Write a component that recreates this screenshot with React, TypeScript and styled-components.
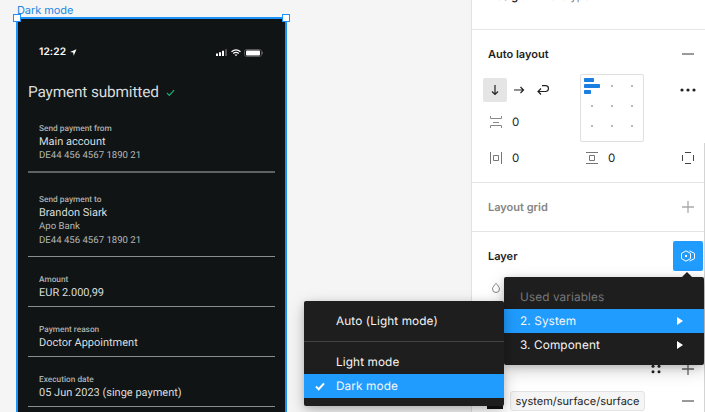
import React from 'react';
import styled, { createGlobalStyle } from 'styled-components';

const GlobalStyle = createGlobalStyle`
  * { box-sizing: border-box; }
  body { margin: 0; overflow: hidden; background: #f5f5f5; }
`;

const Editor = styled.div`
  position: relative;
  display: flex;
  width: 705px;
  height: 412px;
  overflow: hidden;
  background: #f5f5f5;
  color: #222;
  font: 12px/16px Inter, 'Liberation Sans', sans-serif;
  text-rendering: geometricPrecision;
`;

/* Canvas */
const Canvas = styled.div`
  flex: 0 0 471px;
  padding: 3px 0 0 16px;
`;

const FrameName = styled.div`
  height: 14px;
  padding-left: 1px;
  font-size: 11px;
  line-height: 14px;
  letter-spacing: -0.08px;
  color: #2187e0;
  white-space: nowrap;
`;

const Frame = styled.div`
  position: relative;
  width: 271px;
  height: 420px;
  padding: 0 10px;
  border: 2px solid #1b93f8;
  background: #101415;
  font-family: Roboto, sans-serif;
`;

const Handle = styled.i<{ $side: 'left' | 'right' }>`
  position: absolute;
  top: -5px;
  ${(p) => p.$side}: -5px;
  width: 8px;
  height: 8px;
  border: 1px solid #1b93f8;
  background: #fff;
`;

const StatusBar = styled.div`
  display: flex;
  align-items: center;
  height: 20px;
  margin: 23px 11px 0 11px;
  font: 600 10.2px/20px Inter, sans-serif;
  color: #fff;
`;

const Clock = styled.span`
  width: 30px;
  letter-spacing: 0.1px;
`;

const StatusIcons = styled.span`
  display: flex;
  align-items: center;
  gap: 3px;
  margin-left: auto;
  padding-top: 1px;
`;

const Heading = styled.h1`
  display: flex;
  align-items: center;
  gap: 7px;
  height: 24px;
  margin: 18px 0 0;
  font-size: 15.4px;
  font-weight: 400;
  letter-spacing: -0.16px;
  color: #d9dddc;
`;

const Fields = styled.div`
  display: flex;
  flex-direction: column;
  width: 247px;
  margin-top: 3px;
`;

const Field = styled.div<{ $height: number; $inset: number; $thick?: boolean }>`
  display: flex;
  flex-direction: column;
  height: ${(p) => p.$height}px;
  padding: ${(p) => p.$inset}px 0 0 11px;
  border-bottom: ${(p) => (p.$thick ? '2px solid #5f6263' : '1px solid #8b8d8e')};
`;

const Label = styled.span`
  height: 13px;
  font-size: 8.3px;
  font-weight: 500;
  line-height: 14px;
  color: #adb2b1;
`;

const Value = styled.span`
  height: 14px;
  font-size: 11px;
  line-height: 14px;
  color: #d9dddc;
`;

const Detail = styled.span`
  height: 14px;
  font-size: 9.6px;
  line-height: 14px;
  color: #b3b8b7;
`;

/* Inspector */
const Inspector = styled.aside`
  flex: 0 0 234px;
  height: 412px;
  overflow: hidden;
  border-left: 1px solid #e2e2e2;
  background: #fff;
`;

const Tabs = styled.nav`
  display: flex;
  gap: 14px;
  align-items: flex-start;
  height: 30px;
  padding-left: 16px;
  border-bottom: 1px solid #e5e5e5;
  font-size: 11px;
`;

const Tab = styled.span<{ $active?: boolean }>`
  margin-top: -12px;
  color: ${(p) => (p.$active ? '#1e1e1e' : '#808080')};
  font-weight: ${(p) => (p.$active ? 600 : 400)};
`;

const Section = styled.section<{ $height: number }>`
  height: ${(p) => p.$height}px;
  border-bottom: 1px solid #e5e5e5;
`;

const SectionHeader = styled.header<{ $muted?: boolean }>`
  display: flex;
  align-items: center;
  justify-content: space-between;
  height: 48px;
  padding: 0 11px 0 16px;
  font-size: 11px;
  font-weight: 600;
  color: ${(p) => (p.$muted ? '#858585' : '#1e1e1e')};
`;

const LayoutControls = styled.div`
  display: grid;
  grid-template-columns: 97px 64px 1fr;
  height: 64px;
  margin-top: -4px;
  padding-left: 11px;
`;

const FlowColumn = styled.div`
  display: flex;
  flex-direction: column;
  gap: 8px;
  padding-top: 4px;
`;

const Row = styled.div<{ $indent?: number }>`
  display: flex;
  height: 24px;
  padding-left: ${(p) => p.$indent ?? 0}px;
`;

const Cell = styled.span<{ $active?: boolean }>`
  display: grid;
  place-items: center;
  width: 24px;
  height: 24px;
  border-radius: 2px;
  background: ${(p) => (p.$active ? '#e5e5e5' : 'transparent')};
`;

const Amount = styled.span`
  padding-left: 4px;
  font-size: 11.5px;
  line-height: 24px;
`;

const AlignBox = styled.div`
  border: 1px solid #e0e0e0;
  border-radius: 2px;
`;

const MoreCell = styled.div`
  display: flex;
  justify-content: flex-end;
  padding: 4px 5px 0 0;
`;

const PaddingRow = styled.div`
  display: grid;
  grid-template-columns: 24px 72px 24px 72px 1fr;
  padding: 8px 0 0 12px;
`;

const VariableButton = styled.button`
  display: grid;
  place-items: center;
  width: 30px;
  height: 30px;
  margin-right: -9px;
  padding: 0;
  border: 0;
  border-radius: 2px;
  background: #209cff;
`;

const BlendRow = styled.div`
  height: 73px;
  padding: 2px 0 0 18px;
`;

const FillActions = styled.div`
  display: flex;
  align-items: center;
  justify-content: flex-end;
  gap: 20px;
  height: 32px;
  padding-right: 11px;
`;

const FillRow = styled.div`
  display: flex;
  align-items: center;
  height: 32px;
  padding: 0 11px 0 15px;
`;

const Swatch = styled.span`
  width: 16px;
  height: 16px;
  background: #101415;
`;

const VariableName = styled.span`
  width: 135px;
  height: 20px;
  margin: 0 auto 0 7px;
  border: 1px solid #e3e3e3;
  border-radius: 3px;
  background: #f5f5f5;
  font-size: 11px;
  line-height: 18px;
  text-align: center;
  white-space: nowrap;
`;

const Scrollbar = styled.i`
  position: absolute;
  top: 143px;
  right: 0;
  bottom: 0;
  width: 1px;
  background: #d4d4d4;
`;

/* Menus */
const Menu = styled.div<{ $left: number; $top: number }>`
  position: absolute;
  left: ${(p) => p.$left}px;
  top: ${(p) => p.$top}px;
  width: 200px;
  padding: 8px 0;
  border-radius: 2px;
  background: #1e1e1e;
  box-shadow: 0 5px 17px rgba(0, 0, 0, 0.2), 0 2px 7px rgba(0, 0, 0, 0.15);
`;

const Pointer = styled.i`
  position: absolute;
  top: -5px;
  right: 12px;
  border: 5px solid transparent;
  border-top: 0;
  border-bottom-color: #1e1e1e;
`;

const MenuItem = styled.div<{ $active?: boolean; $muted?: boolean; $checkable?: boolean }>`
  display: grid;
  grid-template-columns: ${(p) => (p.$checkable ? '32px 1fr' : '16px 1fr 28px')};
  align-items: center;
  height: 24px;
  font-size: 11.8px;
  letter-spacing: 0.1px;
  color: ${(p) => (p.$muted ? '#777' : '#f5f5f5')};
  background: ${(p) => (p.$active ? '#209cff' : 'transparent')};
`;

const MenuMark = styled.span`
  display: flex;
  padding-left: 11px;
`;

const Divider = styled.hr`
  height: 1px;
  margin: 8px 0;
  border: 0;
  background: #444;
`;

const Minus = () => (
  <svg width="12" height="12"><path d="M0 6h12" stroke="#808080" strokeWidth="1.6" /></svg>
);

const Plus = ({ color = '#aaa' }: { color?: string }) => (
  <svg width="12" height="12"><path d="M0 6h12M6 0v12" stroke={color} strokeWidth="1.3" /></svg>
);

const Check = ({ color, width, size }: { color: string; width: number; size: number }) => (
  <svg width={size} height={size} viewBox="0 0 10 10" fill="none">
    <path d="M1 5.5 3.7 8.2 9 2.3" stroke={color} strokeWidth={width} />
  </svg>
);

const Arrow = () => (
  <svg width="8" height="8"><path d="M1 0v8l6-4z" fill="#fff" /></svg>
);

const fields = [
  { label: 'Send payment from', value: 'Main account', details: ['DE44 456 4567 1890 21'], height: 66, inset: 15, thick: true },
  { label: 'Send payment to', value: 'Brandon Siark', details: ['Apo Bank', 'DE44 456 4567 1890 21'], height: 84, inset: 20 },
  { label: 'Amount', value: 'EUR 2.000,99', details: [], height: 50, inset: 16 },
  { label: 'Payment reason', value: 'Doctor Appointment', details: [], height: 50, inset: 16 },
  { label: 'Execution date', value: '05 Jun 2023 (singe payment)', details: [], height: 50, inset: 16 },
];

const PhoneFrame = () => (
  <Frame>
    <Handle $side="left" />
    <Handle $side="right" />
    <StatusBar>
      <Clock>12:22</Clock>
      <svg width="8" height="8"><path d="M7.500 1.200 4.700 7.700 4.200 4.500 1 4z" fill="#fff" /></svg>
      <StatusIcons>
        <svg width="12" height="7">
          <path d="M0 4.500h2V7H0zM3 3.200h2V7H3zM6 1.700h2V7H6z" fill="#fff" />
          <path d="M9 .3h2V7H9z" fill="#555" />
        </svg>
        <svg width="10" height="8" fill="none" stroke="#fff" strokeWidth="1.3">
          <path d="M.5 2.700Q5-.9 9.500 2.700M2.200 4.500Q5 2.400 7.800 4.500" />
          <path d="M3.500 5.500h3L5 7.200z" fill="#fff" stroke="none" />
        </svg>
        <svg width="20" height="8">
          <rect x=".5" y=".5" width="17" height="7" rx="2" fill="none" stroke="#555" />
          <rect x="2" y="1.500" width="14" height="5" rx=".8" fill="#fff" />
          <path d="M18.500 2.700v2.600" stroke="#555" />
        </svg>
      </StatusIcons>
    </StatusBar>
    <Heading>Payment submitted <Check color="#17b978" width={1.2} size={9} /></Heading>
    <Fields>
      {fields.map((f) => (
        <Field key={f.label} $height={f.height} $inset={f.inset} $thick={f.thick}>
          <Label>{f.label}</Label>
          <Value>{f.value}</Value>
          {f.details.map((d) => <Detail key={d}>{d}</Detail>)}
        </Field>
      ))}
    </Fields>
  </Frame>
);

const AlignGrid = () => (
  <svg width="62" height="62">
    <g fill="#1a7fe0">
      <rect x="3" y="3" width="10" height="4" rx=".8" />
      <rect x="3" y="9" width="16" height="4" rx=".8" />
      <rect x="3" y="15" width="7" height="4" rx=".8" />
    </g>
    <path d="M30 11h2m18 0h2M10 31h2m18 0h2m18 0h2M10 51h2m18 0h2m18 0h2" stroke="#b8b8b8" strokeWidth="2" />
  </svg>
);

export default function App() {
  return (
    <>
      <GlobalStyle />
      <Editor>
        <Canvas>
          <FrameName>Dark mode</FrameName>
          <PhoneFrame />
        </Canvas>
        <Inspector>
          <Tabs><Tab $active>Design</Tab><Tab>Prototype</Tab></Tabs>
          <Section $height={153}>
            <SectionHeader>Auto layout <Minus /></SectionHeader>
            <LayoutControls>
              <FlowColumn>
                <Row>
                  <Cell $active>
                    <svg width="12" height="12" fill="none" stroke="#222" strokeWidth="1.2"><path d="M6 1v9.500M3 7.500l3 3 3-3" /></svg>
                  </Cell>
                  <Cell>
                    <svg width="12" height="12" fill="none" stroke="#222" strokeWidth="1.2"><path d="M1 6h9.500M7.500 3l3 3-3 3" /></svg>
                  </Cell>
                  <Cell>
                    <svg width="12" height="12" fill="none" stroke="#222" strokeWidth="1.2"><path d="M5 1.600h3.500a2.700 2.700 0 0 1 0 5.900H1M4 4.500l-3 3 3 3" /></svg>
                  </Cell>
                </Row>
                <Row $indent={1}>
                  <Cell>
                    <svg width="12" height="14" fill="none" stroke="#888"><path d="M.5 1v2.500h11V1M3 7.500h6M.5 13v-2.500h11V13" /></svg>
                  </Cell>
                  <Amount>0</Amount>
                </Row>
              </FlowColumn>
              <AlignBox><AlignGrid /></AlignBox>
              <MoreCell>
                <Cell><svg width="16" height="4" fill="#222"><circle cx="2" cy="2" r="1.600" /><circle cx="8" cy="2" r="1.600" /><circle cx="14" cy="2" r="1.600" /></svg></Cell>
              </MoreCell>
            </LayoutControls>
            <PaddingRow>
              <Cell><svg width="12" height="12" fill="none" stroke="#777"><path d="M.5 0v12M11.500 0v12M3.500 3.500h5v5h-5z" /></svg></Cell>
              <Amount>0</Amount>
              <Cell><svg width="12" height="12" fill="none" stroke="#777"><path d="M0 .5h12M0 11.500h12M3.500 3.500h5v5h-5z" /></svg></Cell>
              <Amount>0</Amount>
              <Cell><svg width="12" height="12" fill="none" stroke="#444"><path d="M3 .5h6M3 11.500h6M.5 3v6M11.500 3v6" /></svg></Cell>
            </PaddingRow>
          </Section>
          <Section $height={49}>
            <SectionHeader $muted>Layout grid <Plus /></SectionHeader>
          </Section>
          <SectionHeader>
            Layer
            <VariableButton>
              <svg width="16" height="12" fill="none" stroke="#fff">
                <path d="M6 .8l4.500 2.600v5.200L6 11.200 1.500 8.600V3.400zM9.500 .8l5 2.600v5.200l-5 2.600" />
                <path d="M5 6h2" strokeWidth="2" />
              </svg>
            </VariableButton>
          </SectionHeader>
          <BlendRow>
            <svg width="12" height="12" fill="none" stroke="#888"><path d="M6 1.300C4.700 3 2.500 5 2.500 7a3.500 3.500 0 0 0 7 0C9.500 5 7.300 3 6 1.300z" /></svg>
          </BlendRow>
          <FillActions>
            <svg width="12" height="12" fill="#222"><circle cx="3" cy="3.200" r="1.500" /><circle cx="9" cy="3.200" r="1.500" /><circle cx="3" cy="8.800" r="1.500" /><circle cx="9" cy="8.800" r="1.500" /></svg>
            <Plus color="#666" />
          </FillActions>
          <FillRow>
            <Swatch />
            <VariableName>system/surface/surface</VariableName>
            <Minus />
          </FillRow>
        </Inspector>
        <Scrollbar />
        <Menu $left={504} $top={277}>
          <Pointer />
          <MenuItem $muted><span /><span>Used variables</span></MenuItem>
          <MenuItem $active><span /><span>2. System</span><Arrow /></MenuItem>
          <MenuItem><span /><span>3. Component</span><Arrow /></MenuItem>
        </Menu>
        <Menu $left={304} $top={301}>
          <MenuItem $checkable><span /><span>Auto (Light mode)</span></MenuItem>
          <Divider />
          <MenuItem $checkable><span /><span>Light mode</span></MenuItem>
          <MenuItem $checkable $active>
            <MenuMark><Check color="#fff" width={2} size={10} /></MenuMark>
            <span>Dark mode</span>
          </MenuItem>
        </Menu>
      </Editor>
    </>
  );
}
